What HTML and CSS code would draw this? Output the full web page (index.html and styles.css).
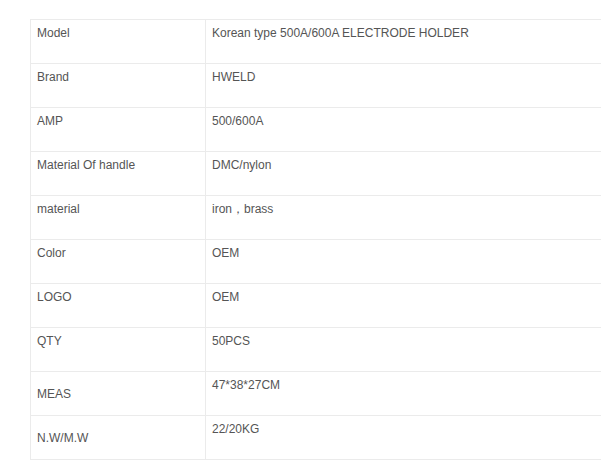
FILE: index.html
```html
<!DOCTYPE html>
<html lang="en">
<head>
<meta charset="utf-8">
<title>Specs</title>
<link rel="stylesheet" href="styles.css">
</head>
<body>
<div class="wrap">
<table class="specs">
  <colgroup><col class="c1"><col class="c2"></colgroup>
  <tr><td>Model</td><td>Korean type 500A/600A ELECTRODE HOLDER</td></tr>
  <tr><td>Brand</td><td>HWELD</td></tr>
  <tr><td>AMP</td><td>500/600A</td></tr>
  <tr><td>Material Of handle</td><td>DMC/nylon</td></tr>
  <tr><td>material</td><td>iron，brass</td></tr>
  <tr><td>Color</td><td>OEM</td></tr>
  <tr><td>LOGO</td><td>OEM</td></tr>
  <tr><td>QTY</td><td>50PCS</td></tr>
  <tr><td class="mid">MEAS</td><td>47*38*27CM</td></tr>
  <tr><td class="mid">N.W/M.W</td><td>22/20KG</td></tr>
</table>
</div>
</body>
</html>
```

FILE: styles.css
```css
html, body {
  margin: 0;
  padding: 0;
  background: #fff;
}
.wrap {
  width: 601px;
  overflow: hidden;
  padding: 19px 0 0 30px;
  box-sizing: border-box;
}
.specs {
  border-collapse: collapse;
  width: 620px;
  table-layout: fixed;
  font-family: "Liberation Sans", Arial, sans-serif;
  font-size: 12px;
  color: #555;
}
.c1 { width: 175px; }
.specs td {
  border: 1px solid #ebebeb;
  height: 44px;
  padding: 6px 6px 5px;
  box-sizing: border-box;
  vertical-align: top;
  line-height: 14px;
}
.specs td.mid {
  vertical-align: middle;
}
```
